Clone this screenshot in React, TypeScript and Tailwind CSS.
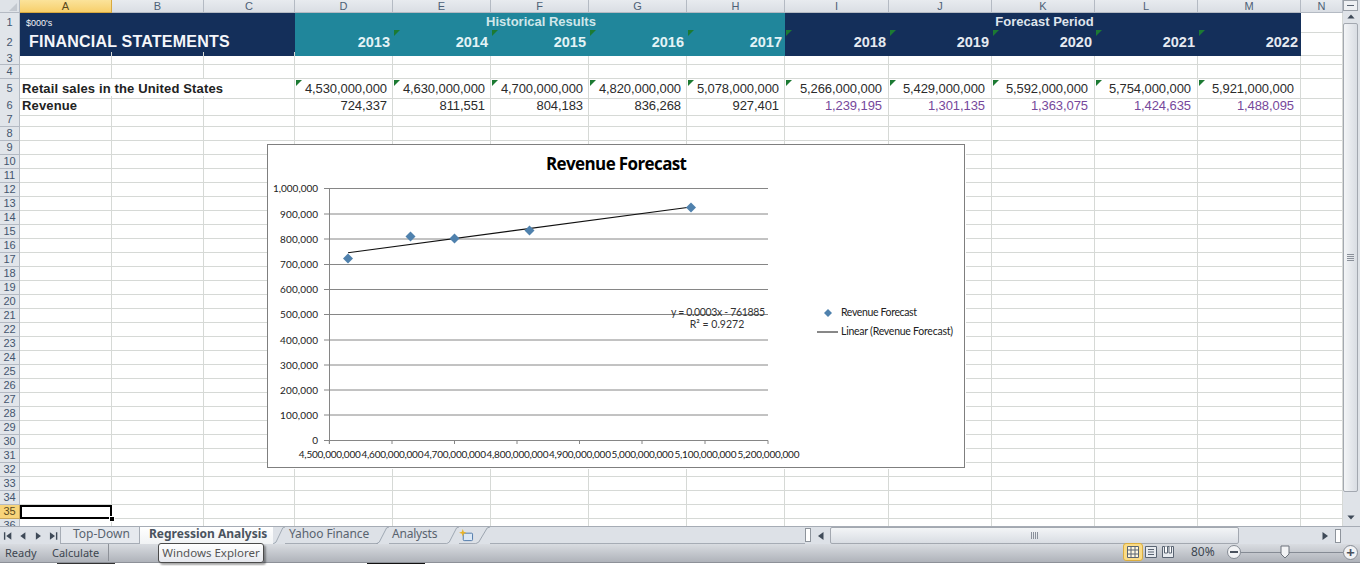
import React from "react";

const GRID =
  "grid grid-cols-[20px_92px_92px_91px_98px_98px_98px_98px_98px_104px_103px_103px_103px_103px_42px]";
const LETTERS = ["A", "B", "C", "D", "E", "F", "G", "H", "I", "J", "K", "L", "M", "N"];
const YEARS = ["2013", "2014", "2015", "2016", "2017", "2018", "2019", "2020", "2021", "2022"];
const RETAIL = ["4,530,000,000", "4,630,000,000", "4,700,000,000", "4,820,000,000", "5,078,000,000", "5,266,000,000", "5,429,000,000", "5,592,000,000", "5,754,000,000", "5,921,000,000"];
const REVENUE = ["724,337", "811,551", "804,183", "836,268", "927,401", "1,239,195", "1,301,135", "1,363,075", "1,424,635", "1,488,095"];
const NAVY = "bg-[#142f5a]";
const TEAL = "bg-[#20869b]";
const LINE = "border-r border-b border-[#d6d9d6]";

function Tri() {
  return (
    <span className="absolute left-[1px] top-[1px] h-0 w-0 border-t-[6px] border-r-[6px] border-t-[#1c7a33] border-r-transparent" />
  );
}

function RowHead({ n, active }: { n: number; active?: boolean }) {
  return (
    <div
      className={`flex items-center justify-center border-r border-b text-[11px] leading-none ${
        active
          ? "border-[#c9a65a] bg-[#f8d47a] text-[#5a4a20]"
          : "border-[#b4bac3] bg-[#e1e5ea] text-[#44566e]"
      }`}
    >
      {n}
    </div>
  );
}

function Blank() {
  return <div className={LINE} />;
}

function BlankRow({ n, h, active }: { n: number; h: string; active?: boolean }) {
  return (
    <div className={`${GRID} ${h}`}>
      <RowHead n={n} active={active} />
      {LETTERS.map((l) =>
        active && l === "A" ? (
          <div key={l} className="relative border-2 border-black">
            <span className="absolute right-[-5px] bottom-[-5px] h-[6px] w-[6px] border border-white bg-black" />
          </div>
        ) : (
          <Blank key={l} />
        )
      )}
    </div>
  );
}

function HeaderRows() {
  return (
    <>
      <div className={`${GRID} h-[16px] text-white`}>
        <RowHead n={1} />
        <div className={`col-span-3 ${NAVY} pl-[6px] text-[9px] leading-[20px] text-[#f2f4f8]`}>$000's</div>
        <div className={`col-span-5 ${TEAL} pl-[2px] text-center text-[13px] font-bold leading-[18px] text-[#cfe6ea]`}>
          Historical Results
        </div>
        <div className={`col-span-5 ${NAVY} pl-[3px] text-center text-[13px] font-bold leading-[18px] text-[#dfe4ec]`}>
          Forecast Period
        </div>
        <Blank />
      </div>
      <div className={`${GRID} h-[23px]`}>
        <RowHead n={2} />
        <div className={`col-span-3 ${NAVY} whitespace-nowrap pl-[9px] text-[16px] font-bold leading-[26px] tracking-[0.22px] text-[#f4f6fa]`}>
          FINANCIAL STATEMENTS
        </div>
        {YEARS.map((y, i) => (
          <div
            key={y}
            className={`relative ${i < 5 ? `${TEAL} text-[#e4f3f6]` : `${NAVY} text-[#e6eaf1]`} pr-[3px] text-right text-[14.5px] font-bold leading-[27px]`}
          >
            {i > 0 && <Tri />}
            {y}
          </div>
        ))}
        <Blank />
      </div>
    </>
  );
}

function DataRows() {
  return (
    <>
      <div className={`${GRID} h-[17px]`}>
        <RowHead n={5} />
        <div className="col-span-3 whitespace-nowrap border-r border-b border-[#d6d9d6] pl-[2px] text-[13px] font-bold leading-[19px] tracking-[0.14px] text-[#222]">
          Retail sales in the United States
        </div>
        {RETAIL.map((v, i) => (
          <div key={v} className={`relative ${LINE} ${i < 5 ? "pr-[5px]" : "pr-[6px]"} text-right text-[13px] leading-[19px] tracking-[-0.08px] text-[#2b2b2b]`}>
            <Tri />
            {v}
          </div>
        ))}
        <Blank />
      </div>
      <div className={`${GRID} h-[17px]`}>
        <RowHead n={6} />
        <div className={`${LINE} pl-[2px] text-[13px] font-bold leading-[19px] tracking-[0.14px] text-[#222]`}>Revenue</div>
        <Blank />
        <Blank />
        {REVENUE.map((v, i) => (
          <div
            key={v}
            className={`${LINE} text-right text-[13px] leading-[19px] tracking-[-0.08px] ${i < 5 ? "pr-[5px] text-[#2b2b2b]" : "pr-[6px] text-[#76489b]"}`}
          >
            {v}
          </div>
        ))}
        <Blank />
      </div>
    </>
  );
}

function Chart() {
  const gridYs = [188.5, 214, 239, 264.5, 289.5, 314.5, 340, 365, 390, 415];
  const yLabels = ["1,000,000", "900,000", "800,000", "700,000", "600,000", "500,000", "400,000", "300,000", "200,000", "100,000"];
  const ticks = [329.3, 392, 454.5, 517, 579.5, 642, 705, 768];
  const xLabels = ["4,500,000,000", "4,600,000,000", "4,700,000,000", "4,800,000,000", "4,900,000,000", "5,000,000,000", "5,100,000,000", "5,200,000,000"];
  const pts: [number, number][] = [[348, 258.5], [410.5, 236.5], [454.5, 238.5], [529.5, 230.5], [691, 207.5]];
  const diamond = (x: number, y: number, r: number) => `${x},${y - r} ${x + r},${y} ${x},${y + r} ${x - r},${y}`;
  return (
    <svg
      viewBox="267 144 699 325"
      className="absolute left-[267px] top-[144px] h-[325px] w-[699px] bg-white font-['Lato',sans-serif]"
    >
      <rect x="267.5" y="144.5" width="697" height="323" fill="#fff" stroke="#7f7f7f" />
      <text x="616.5" y="170" textAnchor="middle" fontSize="17" fontWeight="700" fill="#000" textLength="141" className="font-['Open_Sans',sans-serif]">
        Revenue Forecast
      </text>
      {gridYs.map((y, i) => (
        <g key={y}>
          <line x1="324" x2="768" y1={y} y2={y} stroke="#868686" />
          <text x="318" y={y + 3.5} textAnchor="end" fontSize="10" fill="#222" textLength={i === 0 ? 45 : 38}>
            {yLabels[i]}
          </text>
        </g>
      ))}
      <line x1="329.5" x2="329.5" y1="188" y2="444" stroke="#868686" />
      <line x1="324" x2="768" y1="440.5" y2="440.5" stroke="#868686" />
      <text x="318" y="444" textAnchor="end" fontSize="10" fill="#222">0</text>
      {ticks.map((x, i) => (
        <g key={x}>
          <line x1={x} x2={x} y1="440.5" y2="444" stroke="#868686" />
          <text x={x - 30.5} y="458" fontSize="10" fill="#222" textLength="62">
            {xLabels[i]}
          </text>
        </g>
      ))}
      <line x1="348" y1="252.7" x2="691" y2="207" stroke="#111" strokeWidth="1.1" />
      {pts.map(([x, y]) => (
        <polygon key={x} points={diamond(x, y, 5)} fill="#4f81ad" />
      ))}
      <text x="718" y="316" textAnchor="middle" fontSize="10.5" fill="#333" textLength="94">y = 0.0003x - 761885</text>
      <text x="717" y="328" textAnchor="middle" fontSize="10.5" fill="#333">R² = 0.9272</text>
      <polygon points={diamond(828, 313, 4)} fill="#4f81ad" />
      <text x="841" y="316" fontSize="10.5" fill="#222" textLength="76">Revenue Forecast</text>
      <line x1="817" x2="838" y1="332" y2="332" stroke="#111" />
      <text x="841" y="335" fontSize="10.5" fill="#222" textLength="112">Linear (Revenue Forecast)</text>
    </svg>
  );
}

function Sheet() {
  const lower: number[] = [];
  for (let i = 8; i <= 36; i++) lower.push(i);
  return (
    <div className="relative h-[526px] w-[1343px] overflow-hidden font-['Liberation_Sans',Arial,sans-serif]">
      <div className={`${GRID} h-[13px]`}>
        <div className="relative border-r border-b border-[#b4bac3] bg-[#dfe3e8]">
          <span className="absolute right-[2px] bottom-[1px] h-0 w-0 border-b-[8px] border-l-[8px] border-b-[#c4c9d0] border-l-transparent" />
        </div>
        {LETTERS.map((l, i) => (
          <div
            key={l}
            className={`flex items-center justify-center border-r border-b text-[11px] leading-none ${
              i === 0
                ? "border-[#d8a93f] bg-gradient-to-b from-[#fbe39a] to-[#f7cf6a] text-[#5a4a20]"
                : "border-[#b4bac3] bg-gradient-to-b from-[#e8ebef] to-[#dadee4] text-[#4d5f76]"
            }`}
          >
            {l}
          </div>
        ))}
      </div>
      <HeaderRows />
      <BlankRow n={3} h="h-[13px]" />
      <BlankRow n={4} h="h-[14px]" />
      <DataRows />
      <BlankRow n={7} h="h-[14px]" />
      {lower.map((n) => (
        <BlankRow key={n} n={n} h="h-[14px]" active={n === 35} />
      ))}
      <Chart />
    </div>
  );
}

function ArrowBtn({ d, cls }: { d: string; cls: string }) {
  return (
    <svg viewBox="0 0 10 10" className={cls}>
      <path d={d} fill="#3f4a58" />
    </svg>
  );
}

function VScroll() {
  return (
    <div className="flex h-[526px] w-[17px] flex-col bg-[#dfe3e8] pr-[2px]">
      <div className="flex h-[11px] items-center justify-center border border-[#9aa0a8] bg-[#eef0f3]">
        <span className="h-[1px] w-[7px] bg-[#5a6472]" />
      </div>
      <div className="flex h-[12px] items-center justify-center">
        <ArrowBtn d="M5 2 L9.5 7 L0.5 7 Z" cls="h-[8px] w-[8px]" />
      </div>
      <div className="flex h-[469px] items-center justify-center rounded-[2px] border border-[#a3a8b0] bg-gradient-to-r from-[#f3f5f7] to-[#d9dde3]">
        <span className="flex flex-col gap-[1px]">
          <span className="h-[1px] w-[7px] bg-[#8a909a]" />
          <span className="h-[1px] w-[7px] bg-[#8a909a]" />
          <span className="h-[1px] w-[7px] bg-[#8a909a]" />
          <span className="h-[1px] w-[7px] bg-[#8a909a]" />
        </span>
      </div>
      <div className="flex flex-1 items-end justify-center pb-[5px]">
        <ArrowBtn d="M5 8 L9.5 3 L0.5 3 Z" cls="h-[8px] w-[8px]" />
      </div>
    </div>
  );
}

function Slant({ cls }: { cls: string }) {
  return (
    <svg viewBox="0 0 16 18" preserveAspectRatio="none" className={cls}>
      <path d="M0 18 L4 16 L13 1 L16 0" fill="none" stroke="#97a0ab" />
    </svg>
  );
}

function TabBar() {
  return (
    <div className="flex h-[18px] items-stretch border-t border-[#a6acb5] bg-[#dde1e7] text-[12px] leading-[14px] text-[#59636f]">
      <div className="flex w-[60px] items-center gap-[6px] pl-[3px] pr-[2px]">
        <ArrowBtn d="M1 1 H2.5 V9 H1 Z M9 1 V9 L3.5 5 Z" cls="h-[10px] w-[10px]" />
        <ArrowBtn d="M8 1 V9 L2.5 5 Z" cls="h-[10px] w-[10px]" />
        <ArrowBtn d="M2 1 V9 L7.5 5 Z" cls="h-[10px] w-[10px]" />
        <ArrowBtn d="M1 1 V9 L6.5 5 Z M7.5 1 H9 V9 H7.5 Z" cls="h-[10px] w-[10px]" />
      </div>
      <div className="flex w-[80px] border-x border-b border-[#a6acb5] bg-[#e6e9ee] pl-[12px]">Top-Down</div>
      <div className="w-[133px] bg-gradient-to-b from-white to-[#f0f2f4] pl-[9px] font-bold text-[#4a535e]">Regression Analysis</div>
      <Slant cls="h-[17px] w-[12px]" />
      <div className="w-[93px] border-b border-[#a6acb5] pl-[4px] tracking-[-0.1px]">Yahoo Finance</div>
      <Slant cls="ml-[-2px] h-[17px] w-[13px]" />
      <div className="w-[57px] border-b border-[#a6acb5] pl-[3px] tracking-[-0.2px]">Analysts</div>
      <Slant cls="h-[17px] w-[13px]" />
      <div className="flex w-[16px] items-center border-b border-[#a6acb5]">
        <svg viewBox="0 0 16 14" className="h-[13px] w-[15px]">
          <rect x="4.5" y="4.5" width="10" height="8" rx="1" fill="#dbe8f6" stroke="#4b76a8" />
          <path d="M4 0 L5 3 L8 4 L5 5 L4 8 L3 5 L0 4 L3 3 Z" fill="#e8b32a" />
        </svg>
      </div>
      <Slant cls="h-[17px] w-[15px]" />
      <div className="w-[315px] border-b border-[#a6acb5]" />
      <div className="my-[1px] h-[14px] w-[6px] border border-[#8e949c] bg-white" />
      <div className="flex w-[19px] items-center justify-center">
        <ArrowBtn d="M7.5 1 V9 L2 5 Z" cls="h-[10px] w-[10px]" />
      </div>
      <div className="flex h-[17px] w-[409px] items-center justify-center rounded-[2px] border border-[#a3a8b0] bg-gradient-to-b from-[#f3f5f7] to-[#d9dde3]">
        <span className="flex gap-[1px]">
          <span className="h-[7px] w-[1px] bg-[#8a909a]" />
          <span className="h-[7px] w-[1px] bg-[#8a909a]" />
          <span className="h-[7px] w-[1px] bg-[#8a909a]" />
          <span className="h-[7px] w-[1px] bg-[#8a909a]" />
        </span>
      </div>
      <div className="flex flex-1 items-center justify-end gap-[5px] pr-[19px]">
        <ArrowBtn d="M2.5 1 V9 L8 5 Z" cls="h-[10px] w-[10px]" />
        <div className="h-[14px] w-[6px] border border-[#8e949c] bg-white" />
      </div>
    </div>
  );
}

function StatusBar() {
  return (
    <div className="relative flex h-[19px] items-center border-b border-[#8d9198] bg-gradient-to-b from-[#d9dce1] to-[#afb3ba] pb-[2px] text-[11px] leading-none text-[#3d4650]">
      <span className="ml-[5px] w-[47px]">Ready</span>
      <span className="w-[56px]">Calculate</span>
      <span className="h-[17px] w-[1px] bg-[#8d9198]" />
      <div className="ml-auto flex items-center">
        <span className="flex h-[18px] w-[20px] items-center justify-center rounded-[3px] border border-[#dcae3f] bg-[#fbdc86]">
          <svg viewBox="0 0 12 12" className="h-[12px] w-[12px]">
            <path d="M0.5 0.5 H11.5 V11.5 H0.5 Z M0.5 4 H11.5 M0.5 8 H11.5 M4 0.5 V11.5 M8 0.5 V11.5" fill="#fff8e0" stroke="#5a6472" />
          </svg>
        </span>
        <svg viewBox="0 0 12 12" className="ml-[2px] h-[12px] w-[12px]">
          <path d="M0.5 0.5 H11.5 V11.5 H0.5 Z" fill="#e8ebef" stroke="#5a6472" />
          <path d="M3 3.5 H9 M3 6 H9 M3 8.5 H9" stroke="#5a6472" />
        </svg>
        <svg viewBox="0 0 12 12" className="ml-[4px] h-[12px] w-[14px]">
          <path d="M0.5 0.5 H11.5 V11.5 H0.5 Z" fill="#e8ebef" stroke="#5a6472" />
          <path d="M2.5 0.5 V7 H5.5 V0.5 M7 0.5 V7 H9.5 V0.5" fill="#fff" stroke="#5a6472" />
        </svg>
        <span className="ml-[16px] w-[22px] text-[12px] text-[#3d4650]">80%</span>
        <span className="ml-[14px] flex h-[14px] w-[14px] items-center justify-center rounded-full border border-[#858b94] bg-[#f2f3f5]">
          <span className="h-[2px] w-[8px] bg-[#4a525e]" />
        </span>
        <div className="relative flex h-[12px] w-[102px] items-center">
          <span className="h-[1px] w-full bg-[#858b94]" />
          <svg viewBox="0 0 10 14" className="absolute left-[39px] top-[-1px] h-[14px] w-[10px]">
            <path d="M1 1 H9 V9 L5 13 L1 9 Z" fill="#f2f3f5" stroke="#6d737c" />
          </svg>
        </div>
        <span className="mr-[2px] flex h-[15px] w-[15px] items-center justify-center rounded-full border border-[#858b94] bg-[#f2f3f5] text-[15px] font-bold text-[#4a525e]">
          +
        </span>
      </div>
      <div className="absolute left-[158px] top-[-1px] z-10 flex h-[20px] w-[106px] items-center justify-center rounded-[3px] border border-[#4a4a4a] bg-gradient-to-b from-white to-[#e6e8ee] text-[11.5px] text-[#555] shadow-[2px_2px_2px_rgba(0,0,0,0.35)]">
        Windows Explorer
      </div>
    </div>
  );
}

export default function App() {
  return (
    <div className="flex h-[566px] w-[1366px] flex-col overflow-hidden bg-white font-['Noto_Sans',sans-serif]">
      <div className="w-[1360px]">
        <div className="flex">
          <Sheet />
          <VScroll />
        </div>
        <TabBar />
        <StatusBar />
      </div>
      <div className="flex">
        <span className="ml-[57px] h-[1px] w-[58px] bg-[#333]" />
        <span className="ml-[252px] h-[1px] w-[58px] bg-[#111]" />
      </div>
    </div>
  );
}
